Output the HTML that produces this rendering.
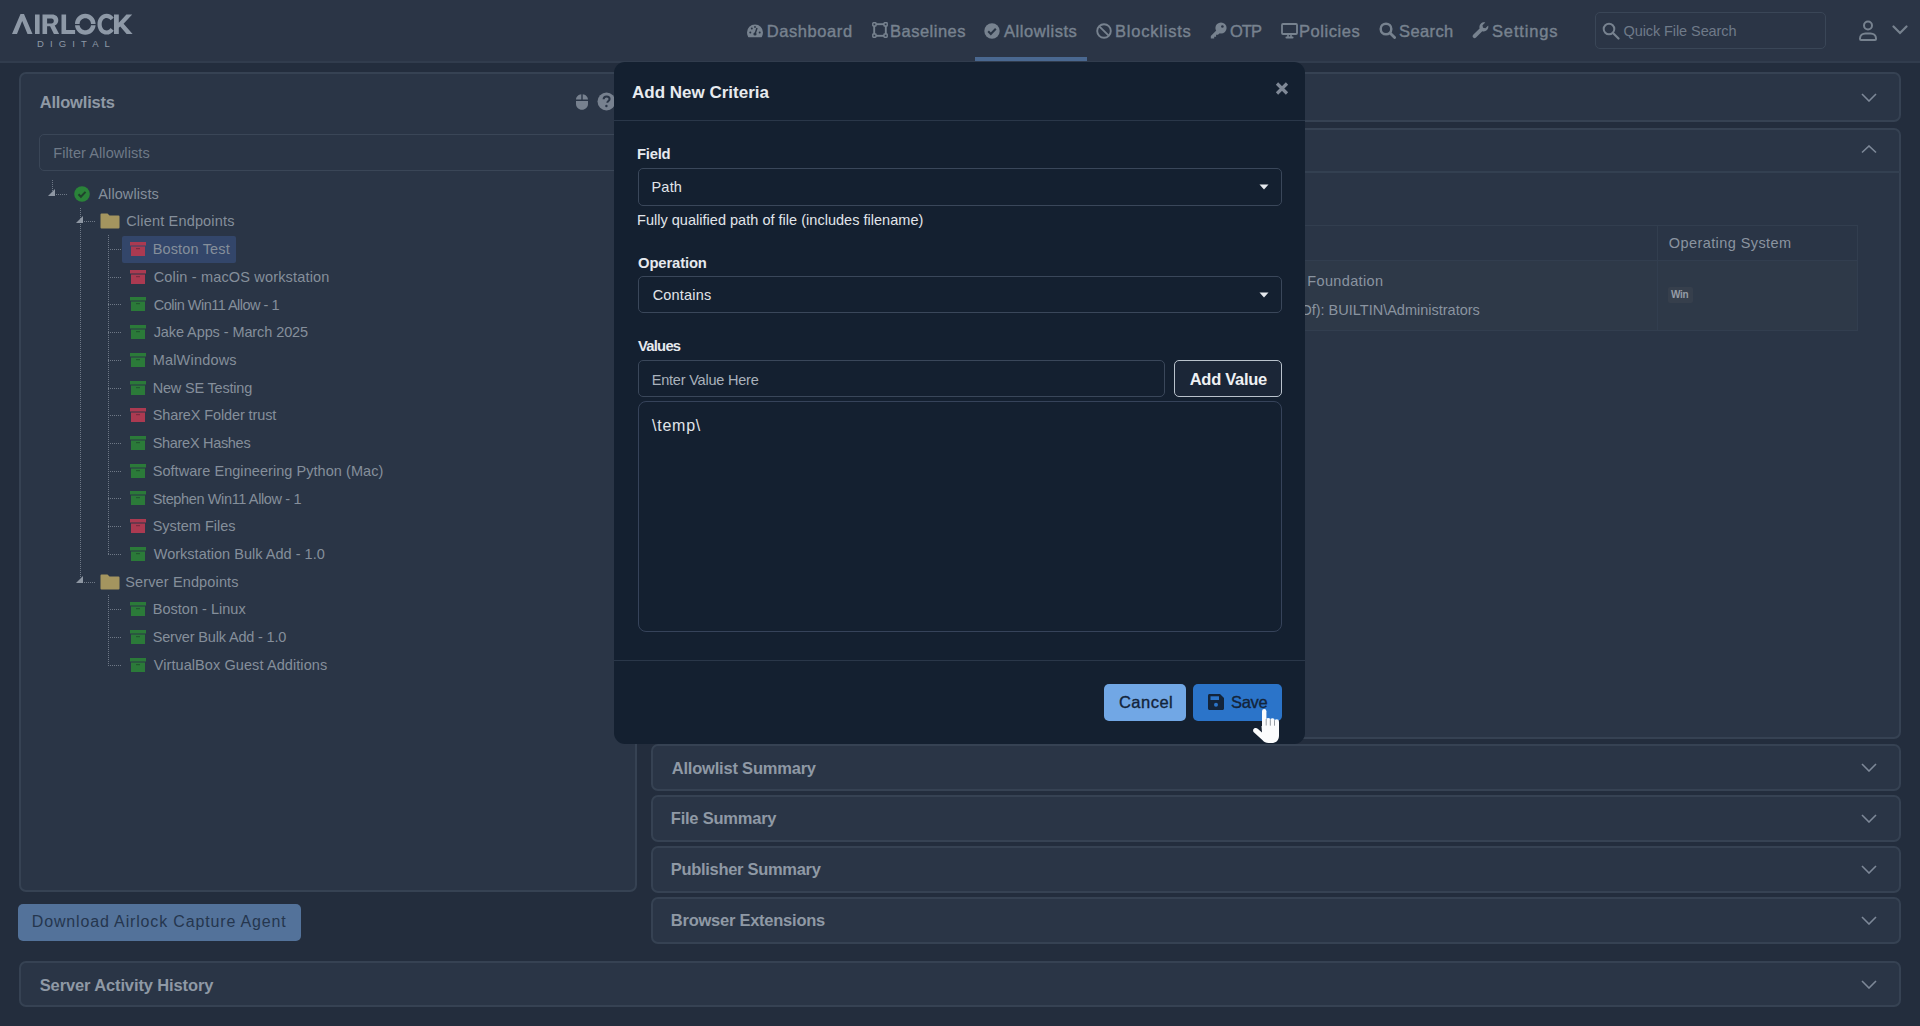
<!DOCTYPE html>
<html><head><meta charset="utf-8"><title>Airlock</title>
<style>
*{box-sizing:border-box;margin:0;padding:0}
html,body{width:1920px;height:1026px;overflow:hidden;background:#232d3d;font-family:"Liberation Sans",sans-serif}
.a{position:absolute}
.t{position:absolute;line-height:1;white-space:nowrap}
.panel{position:absolute;background:#2a3546;border:2px solid #364253;border-radius:7px}
.vd{position:absolute;width:1px;background:repeating-linear-gradient(to bottom,#6e7886 0 1px,transparent 1px 2px)}
.hd{position:absolute;height:1px;background:repeating-linear-gradient(to right,#6e7886 0 1px,transparent 1px 2px)}
.tri{position:absolute;width:0;height:0;border-left:7px solid transparent;border-bottom:7px solid #8e97a3}
.ic{position:absolute;line-height:0}
.chev{position:absolute}
</style></head><body>
<div class="a" style="left:0;top:0;width:1920px;height:62px;background:#2b3546"></div>
<div class="a" style="left:0;top:61px;width:1920px;height:2px;background:#313c4d"></div>
<svg class="a" style="left:11px;top:13px" width="125" height="36" viewBox="0 0 125 36">
<g fill="#8e99a7">
<path d="M1 21 L9.5 1 L13 1 L21.5 21 L16.5 21 L11.2 8 L6 21z"/>
<rect x="24" y="1.5" width="4.6" height="19.5"/>
<path d="M31.5 1.5h9.5c4 0 6.3 2.3 6.3 5.8 0 2.6-1.4 4.4-3.6 5.2l4.4 8.5h-5.2l-3.8-7.8h-3v7.8h-4.6z M36.1 5.5v5h4.4c1.5 0 2.3-.9 2.3-2.5s-.8-2.5-2.3-2.5z"/>
<path d="M50.5 1.5h4.6v15.5h9v4h-13.6z"/>
<g transform="translate(-2.7,0)"><path d="M77 0.8c-5.7 0-10.3 4.5-10.3 10.2h4.6c0-3.2 2.5-5.8 5.7-5.8s5.7 2.6 5.7 5.8h4.6C87.3 5.3 82.7.8 77 .8z"/>
<path d="M66.7 12.2c.4 5.3 4.8 9.5 10.3 9.5s9.9-4.2 10.3-9.5h-4.6c-.4 2.8-2.8 5-5.7 5s-5.3-2.2-5.7-5z"/></g>
<g transform="translate(7.1,0) scale(0.89,1)"><path d="M99.5 0.8c-5.8 0-10.3 4.5-10.3 10.4s4.5 10.4 10.3 10.4c3.3 0 6.1-1.5 8-3.9l-3.6-2.6c-1 1.4-2.6 2.3-4.4 2.3-3.2 0-5.6-2.6-5.6-6.2s2.4-6.2 5.6-6.2c1.8 0 3.4.9 4.4 2.3l3.6-2.6c-1.9-2.4-4.7-3.9-8-3.9z"/></g>
<path d="M103 1.5h4.8v8.2l7.6-8.2h5.8l-8.6 9.2 9 10.3h-6l-6.4-7.6-1.4 1.4v6.2h-4.8z"/>
</g>
<text x="26" y="34" font-family="Liberation Sans" font-size="9.5" fill="#8e99a7" letter-spacing="6.1">DIGITAL</text>
</svg>
<div class="t" style="left:766.80px;top:22.98px;font-size:16.5px;font-weight:400;letter-spacing:0.575px;color:#77828f;-webkit-text-stroke:0.4px #77828f">Dashboard</div>
<div class="t" style="left:890.00px;top:22.98px;font-size:16.5px;font-weight:400;letter-spacing:0.5px;color:#77828f;-webkit-text-stroke:0.4px #77828f">Baselines</div>
<div class="t" style="left:1004.00px;top:22.98px;font-size:16.5px;font-weight:400;letter-spacing:0.556px;color:#77828f;-webkit-text-stroke:0.4px #77828f">Allowlists</div>
<div class="t" style="left:1115.00px;top:22.98px;font-size:16.5px;font-weight:400;letter-spacing:0.778px;color:#77828f;-webkit-text-stroke:0.4px #77828f">Blocklists</div>
<div class="t" style="left:1230.00px;top:22.98px;font-size:16.5px;font-weight:400;letter-spacing:-1.0px;color:#77828f;-webkit-text-stroke:0.4px #77828f">OTP</div>
<div class="t" style="left:1299.00px;top:22.98px;font-size:16.5px;font-weight:400;letter-spacing:0.571px;color:#77828f;-webkit-text-stroke:0.4px #77828f">Policies</div>
<div class="t" style="left:1399.00px;top:22.98px;font-size:16.5px;font-weight:400;letter-spacing:0.4px;color:#77828f;-webkit-text-stroke:0.4px #77828f">Search</div>
<div class="t" style="left:1492.00px;top:22.98px;font-size:16.5px;font-weight:400;letter-spacing:0.857px;color:#77828f;-webkit-text-stroke:0.4px #77828f">Settings</div>
<svg class="a" style="left:746px;top:22px" width="18" height="18" viewBox="0 0 18 18"><path d="M9 2.5A8 8 0 0 0 1 10.5c0 1.6.4 3.1 1.2 4.4.2.3.5.4.8.4h12c.3 0 .6-.1.8-.4.8-1.3 1.2-2.8 1.2-4.4A8 8 0 0 0 9 2.5z" fill="#77828f"/><circle cx="9" cy="12" r="1.6" fill="#2a3545"/><path d="M9 12l2-6" stroke="#2a3545" stroke-width="1.4"/><circle cx="4.3" cy="10.5" r="1" fill="#2a3545"/><circle cx="13.7" cy="10.5" r="1" fill="#2a3545"/><circle cx="5.8" cy="6.6" r="1" fill="#2a3545"/><circle cx="9" cy="5" r="0.9" fill="#2a3545"/></svg>
<svg class="a" style="left:872px;top:22px" width="16" height="16" viewBox="0 0 16 16"><rect x="2.2" y="2.2" width="11.6" height="11.6" fill="none" stroke="#77828f" stroke-width="1.9"/><g fill="#2b3546" stroke="#77828f" stroke-width="1.4"><rect x="0.8" y="0.8" width="3.2" height="3.2" rx="0.6"/><rect x="12" y="0.8" width="3.2" height="3.2" rx="0.6"/><rect x="0.8" y="12" width="3.2" height="3.2" rx="0.6"/><rect x="12" y="12" width="3.2" height="3.2" rx="0.6"/></g></svg>
<svg class="a" style="left:984px;top:23px" width="16" height="16" viewBox="0 0 16 16"><circle cx="8" cy="8" r="7.7" fill="#77828f"/><path d="M4.2 8.3l2.6 2.6 5-5.2" stroke="#2a3545" stroke-width="2.1" fill="none"/></svg>
<svg class="a" style="left:1096px;top:23px" width="16" height="16" viewBox="0 0 16 16"><circle cx="8" cy="8" r="6.8" fill="none" stroke="#77828f" stroke-width="1.9"/><path d="M3.3 3.3l9.4 9.4" stroke="#77828f" stroke-width="1.9"/></svg>
<svg class="a" style="left:1210px;top:22px" width="17" height="17" viewBox="0 0 17 17"><circle cx="11" cy="6" r="5.6" fill="#77828f"/><circle cx="12.4" cy="4.5" r="1.3" fill="#2b3546"/><path d="M8 6.8L0.8 14v2.6h3.4v-1.9h1.9v-1.9h1.9l2.8-2.8z" fill="#77828f"/></svg>
<svg class="a" style="left:1281px;top:23px" width="17" height="16" viewBox="0 0 17 16"><rect x="1" y="1" width="15" height="10" rx="1" fill="none" stroke="#77828f" stroke-width="1.8"/><path d="M7 11.5v2.5M10 11.5v2.5" stroke="#77828f" stroke-width="1.6"/><rect x="4.5" y="13.5" width="8" height="2" rx="0.8" fill="#77828f"/></svg>
<svg class="a" style="left:1379px;top:22px" width="17" height="17" viewBox="0 0 17 17"><circle cx="7" cy="7" r="5.3" fill="none" stroke="#77828f" stroke-width="2.5"/><path d="M11 11l4.6 4.6" stroke="#77828f" stroke-width="2.8" stroke-linecap="round"/></svg>
<svg class="a" style="left:1472px;top:22px" width="17" height="17" viewBox="0 0 17 17"><path d="M16.2 3.6c.4 1.6 0 3.3-1.2 4.5-1.3 1.3-3.1 1.6-4.7 1.1L4 15.6c-.8.8-2 .8-2.8 0s-.8-2 0-2.8l6.4-6.4C7.1 4.8 7.5 3 8.8 1.7 10 .5 11.7.1 13.3.5l-2.8 2.8.5 2.4 2.4.5z" fill="#77828f"/></svg>
<svg class="a" style="left:1602px;top:22px" width="18" height="18" viewBox="0 0 18 18"><circle cx="7" cy="7" r="5.3" fill="none" stroke="#77828f" stroke-width="2"/><path d="M11 11l5.5 5.5" stroke="#77828f" stroke-width="2.2" stroke-linecap="round"/></svg>
<svg class="a" style="left:1857px;top:20px" width="22" height="21" viewBox="0 0 22 21"><circle cx="11" cy="5.5" r="4" fill="none" stroke="#77828f" stroke-width="2"/><path d="M3 18.5c0-3 2.5-5 5.5-5h5c3 0 5.5 2 5.5 5v.5c0 .5-.4 1-1 1h-14c-.6 0-1-.5-1-1z" fill="none" stroke="#77828f" stroke-width="2"/></svg>
<svg class="a" style="left:1892px;top:25px" width="16" height="10" viewBox="0 0 16 10"><path d="M1.5 1.5l6.5 6.5 6.5-6.5" fill="none" stroke="#77828f" stroke-width="2.2" stroke-linecap="round"/></svg>

<div class="a" style="left:975px;top:57px;width:112px;height:4px;background:#4a6890"></div>
<div class="a" style="left:1595px;top:12px;width:231px;height:37px;border:1.5px solid #3a4657;border-radius:5px"></div>
<div class="t" style="left:1623.50px;top:23.97px;font-size:14.5px;font-weight:400;letter-spacing:-0.086px;color:#6f7a89;">Quick File Search</div>
<div class="panel" style="left:19px;top:72px;width:618px;height:820px"></div>
<div class="t" style="left:39.70px;top:93.67px;font-size:16.5px;font-weight:700;letter-spacing:-0.189px;color:#8f99a5;">Allowlists</div>
<svg class="a" style="left:575px;top:93px" width="14" height="17" viewBox="0 0 14 17"><path d="M1 6.5h5.3V1.2C3.4 1.5 1.1 3.8 1 6.5z M7.7 1.2v5.3H13C12.9 3.8 10.6 1.5 7.7 1.2z M1 8v3c0 3.2 2.7 5.8 6 5.8s6-2.6 6-5.8V8z" fill="#77818f"/></svg>
<svg class="a" style="left:597px;top:92px" width="19" height="19" viewBox="0 0 19 19"><circle cx="9.5" cy="9.5" r="9" fill="#77818f"/><path d="M6.6 7.2c0-1.7 1.3-2.8 3-2.8s3 1.1 3 2.6c0 1.9-2.3 2.1-2.3 3.8" fill="none" stroke="#2a3546" stroke-width="2"/><circle cx="9.4" cy="14" r="1.2" fill="#2a3546"/></svg>
<div class="a" style="left:39px;top:134px;width:590px;height:37px;border:1.5px solid #3a4657;border-radius:5px"></div>
<div class="t" style="left:53.30px;top:145.78px;font-size:14.5px;font-weight:400;letter-spacing:0.081px;color:#6f7a88;">Filter Allowlists</div>
<div class="a" style="left:122px;top:236px;width:114px;height:27px;background:#33466a;border-radius:2px"></div>
<div class="vd" style="left:52px;top:180px;height:14px"></div>
<div class="tri" style="left:48px;top:189px"></div>
<div class="hd" style="left:56px;top:194px;width:11px"></div>
<div class="vd" style="left:80px;top:208px;height:369px"></div>
<div class="tri" style="left:76px;top:216px"></div>
<div class="hd" style="left:84px;top:221px;width:11px"></div>
<div class="hd" style="left:108px;top:249px;width:14px"></div>
<div class="hd" style="left:108px;top:277px;width:14px"></div>
<div class="hd" style="left:108px;top:304px;width:14px"></div>
<div class="hd" style="left:108px;top:332px;width:14px"></div>
<div class="hd" style="left:108px;top:360px;width:14px"></div>
<div class="hd" style="left:108px;top:388px;width:14px"></div>
<div class="hd" style="left:108px;top:415px;width:14px"></div>
<div class="hd" style="left:108px;top:443px;width:14px"></div>
<div class="hd" style="left:108px;top:471px;width:14px"></div>
<div class="hd" style="left:108px;top:498px;width:14px"></div>
<div class="hd" style="left:108px;top:526px;width:14px"></div>
<div class="hd" style="left:108px;top:554px;width:14px"></div>
<div class="tri" style="left:76px;top:576px"></div>
<div class="hd" style="left:84px;top:582px;width:11px"></div>
<div class="hd" style="left:108px;top:609px;width:14px"></div>
<div class="hd" style="left:108px;top:637px;width:14px"></div>
<div class="hd" style="left:108px;top:665px;width:14px"></div>
<div class="vd" style="left:108px;top:235px;height:320px"></div>
<div class="vd" style="left:108px;top:595px;height:71px"></div>
<div class="t" style="left:98.30px;top:186.68px;font-size:14.5px;font-weight:400;letter-spacing:0.099px;color:#858f9b;">Allowlists</div>
<svg class="a" style="left:74px;top:186px" width="16" height="16" viewBox="0 0 16 16"><circle cx="8" cy="8" r="7.8" fill="#2a8339"/><path d="M4.5 8.3l2.4 2.4 4.6-4.8" stroke="#20412c" stroke-width="2" fill="none"/></svg>
<div class="t" style="left:126.20px;top:214.40px;font-size:14.5px;font-weight:400;letter-spacing:0.179px;color:#858f9b;">Client Endpoints</div>
<svg class="a" style="left:100px;top:213px" width="20" height="16" viewBox="0 0 20 16"><path d="M1.5 0.5h6l2 2h9a1 1 0 0 1 1 1v11a1 1 0 0 1-1 1h-17a1 1 0 0 1-1-1v-13a1 1 0 0 1 1-1z" fill="#a4955f"/></svg>
<div class="t" style="left:152.70px;top:242.12px;font-size:14.5px;font-weight:400;letter-spacing:0.15px;color:#858f9b;">Boston Test</div>
<svg class="a" style="left:130px;top:242px" width="16" height="14" viewBox="0 0 16 14"><rect x="0" y="0" width="16" height="3.5" fill="#ab3a51"/><rect x="1" y="4.5" width="14" height="9.5" fill="#ab3a51"/><rect x="6" y="6" width="4" height="1.2" fill="#7c2c40"/></svg>
<div class="t" style="left:153.70px;top:269.83px;font-size:14.5px;font-weight:400;letter-spacing:0.167px;color:#858f9b;">Colin - macOS workstation</div>
<svg class="a" style="left:130px;top:270px" width="16" height="14" viewBox="0 0 16 14"><rect x="0" y="0" width="16" height="3.5" fill="#ab3a51"/><rect x="1" y="4.5" width="14" height="9.5" fill="#ab3a51"/><rect x="6" y="6" width="4" height="1.2" fill="#7c2c40"/></svg>
<div class="t" style="left:153.70px;top:297.56px;font-size:14.5px;font-weight:400;letter-spacing:-0.505px;color:#858f9b;">Colin Win11 Allow - 1</div>
<svg class="a" style="left:130px;top:297px" width="16" height="14" viewBox="0 0 16 14"><rect x="0" y="0" width="16" height="3.5" fill="#2b7a39"/><rect x="1" y="4.5" width="14" height="9.5" fill="#2b7a39"/><rect x="6" y="6" width="4" height="1.2" fill="#215a2e"/></svg>
<div class="t" style="left:153.70px;top:325.28px;font-size:14.5px;font-weight:400;letter-spacing:-0.09px;color:#858f9b;">Jake Apps - March 2025</div>
<svg class="a" style="left:130px;top:325px" width="16" height="14" viewBox="0 0 16 14"><rect x="0" y="0" width="16" height="3.5" fill="#2b7a39"/><rect x="1" y="4.5" width="14" height="9.5" fill="#2b7a39"/><rect x="6" y="6" width="4" height="1.2" fill="#215a2e"/></svg>
<div class="t" style="left:152.70px;top:353.00px;font-size:14.5px;font-weight:400;letter-spacing:0.189px;color:#858f9b;">MalWindows</div>
<svg class="a" style="left:130px;top:353px" width="16" height="14" viewBox="0 0 16 14"><rect x="0" y="0" width="16" height="3.5" fill="#2b7a39"/><rect x="1" y="4.5" width="14" height="9.5" fill="#2b7a39"/><rect x="6" y="6" width="4" height="1.2" fill="#215a2e"/></svg>
<div class="t" style="left:152.70px;top:380.71px;font-size:14.5px;font-weight:400;letter-spacing:-0.192px;color:#858f9b;">New SE Testing</div>
<svg class="a" style="left:130px;top:381px" width="16" height="14" viewBox="0 0 16 14"><rect x="0" y="0" width="16" height="3.5" fill="#2b7a39"/><rect x="1" y="4.5" width="14" height="9.5" fill="#2b7a39"/><rect x="6" y="6" width="4" height="1.2" fill="#215a2e"/></svg>
<div class="t" style="left:152.70px;top:408.44px;font-size:14.5px;font-weight:400;letter-spacing:-0.116px;color:#858f9b;">ShareX Folder trust</div>
<svg class="a" style="left:130px;top:408px" width="16" height="14" viewBox="0 0 16 14"><rect x="0" y="0" width="16" height="3.5" fill="#ab3a51"/><rect x="1" y="4.5" width="14" height="9.5" fill="#ab3a51"/><rect x="6" y="6" width="4" height="1.2" fill="#7c2c40"/></svg>
<div class="t" style="left:152.70px;top:436.16px;font-size:14.5px;font-weight:400;letter-spacing:-0.301px;color:#858f9b;">ShareX Hashes</div>
<svg class="a" style="left:130px;top:436px" width="16" height="14" viewBox="0 0 16 14"><rect x="0" y="0" width="16" height="3.5" fill="#2b7a39"/><rect x="1" y="4.5" width="14" height="9.5" fill="#2b7a39"/><rect x="6" y="6" width="4" height="1.2" fill="#215a2e"/></svg>
<div class="t" style="left:152.70px;top:463.88px;font-size:14.5px;font-weight:400;letter-spacing:0.053px;color:#858f9b;">Software Engineering Python (Mac)</div>
<svg class="a" style="left:130px;top:464px" width="16" height="14" viewBox="0 0 16 14"><rect x="0" y="0" width="16" height="3.5" fill="#2b7a39"/><rect x="1" y="4.5" width="14" height="9.5" fill="#2b7a39"/><rect x="6" y="6" width="4" height="1.2" fill="#215a2e"/></svg>
<div class="t" style="left:152.70px;top:491.59px;font-size:14.5px;font-weight:400;letter-spacing:-0.367px;color:#858f9b;">Stephen Win11 Allow - 1</div>
<svg class="a" style="left:130px;top:491px" width="16" height="14" viewBox="0 0 16 14"><rect x="0" y="0" width="16" height="3.5" fill="#2b7a39"/><rect x="1" y="4.5" width="14" height="9.5" fill="#2b7a39"/><rect x="6" y="6" width="4" height="1.2" fill="#215a2e"/></svg>
<div class="t" style="left:152.70px;top:519.31px;font-size:14.5px;font-weight:400;letter-spacing:-0.017px;color:#858f9b;">System Files</div>
<svg class="a" style="left:130px;top:519px" width="16" height="14" viewBox="0 0 16 14"><rect x="0" y="0" width="16" height="3.5" fill="#ab3a51"/><rect x="1" y="4.5" width="14" height="9.5" fill="#ab3a51"/><rect x="6" y="6" width="4" height="1.2" fill="#7c2c40"/></svg>
<div class="t" style="left:153.70px;top:547.03px;font-size:14.5px;font-weight:400;letter-spacing:0.02px;color:#858f9b;">Workstation Bulk Add - 1.0</div>
<svg class="a" style="left:130px;top:547px" width="16" height="14" viewBox="0 0 16 14"><rect x="0" y="0" width="16" height="3.5" fill="#2b7a39"/><rect x="1" y="4.5" width="14" height="9.5" fill="#2b7a39"/><rect x="6" y="6" width="4" height="1.2" fill="#215a2e"/></svg>
<div class="t" style="left:125.20px;top:574.75px;font-size:14.5px;font-weight:400;letter-spacing:0.14px;color:#858f9b;">Server Endpoints</div>
<svg class="a" style="left:100px;top:574px" width="20" height="16" viewBox="0 0 20 16"><path d="M1.5 0.5h6l2 2h9a1 1 0 0 1 1 1v11a1 1 0 0 1-1 1h-17a1 1 0 0 1-1-1v-13a1 1 0 0 1 1-1z" fill="#a4955f"/></svg>
<div class="t" style="left:152.70px;top:602.47px;font-size:14.5px;font-weight:400;letter-spacing:0.024px;color:#858f9b;">Boston - Linux</div>
<svg class="a" style="left:130px;top:602px" width="16" height="14" viewBox="0 0 16 14"><rect x="0" y="0" width="16" height="3.5" fill="#2b7a39"/><rect x="1" y="4.5" width="14" height="9.5" fill="#2b7a39"/><rect x="6" y="6" width="4" height="1.2" fill="#215a2e"/></svg>
<div class="t" style="left:152.70px;top:630.19px;font-size:14.5px;font-weight:400;letter-spacing:-0.165px;color:#858f9b;">Server Bulk Add - 1.0</div>
<svg class="a" style="left:130px;top:630px" width="16" height="14" viewBox="0 0 16 14"><rect x="0" y="0" width="16" height="3.5" fill="#2b7a39"/><rect x="1" y="4.5" width="14" height="9.5" fill="#2b7a39"/><rect x="6" y="6" width="4" height="1.2" fill="#215a2e"/></svg>
<div class="t" style="left:153.70px;top:657.91px;font-size:14.5px;font-weight:400;letter-spacing:0.084px;color:#858f9b;">VirtualBox Guest Additions</div>
<svg class="a" style="left:130px;top:658px" width="16" height="14" viewBox="0 0 16 14"><rect x="0" y="0" width="16" height="3.5" fill="#2b7a39"/><rect x="1" y="4.5" width="14" height="9.5" fill="#2b7a39"/><rect x="6" y="6" width="4" height="1.2" fill="#215a2e"/></svg>
<div class="a" style="left:18px;top:904px;width:283px;height:37px;background:#53729a;border-radius:5px"></div>
<div class="t" style="left:31.80px;top:914.40px;font-size:16px;font-weight:400;letter-spacing:0.845px;color:#25364e;">Download Airlock Capture Agent</div>
<div class="panel" style="left:19px;top:961px;width:1882px;height:46px"></div>
<div class="t" style="left:39.70px;top:976.77px;font-size:16.5px;font-weight:700;letter-spacing:-0.122px;color:#8f99a5;">Server Activity History</div>
<div class="panel" style="left:651px;top:72px;width:1250px;height:50px"></div>
<svg class="a" style="left:1861px;top:93px" width="16" height="9" viewBox="0 0 16 9"><path d="M1 1l7 7 7-7" fill="none" stroke="#7d8898" stroke-width="1.6"/></svg>
<div class="panel" style="left:651px;top:128px;width:1250px;height:611px"></div>
<svg class="a" style="left:1861px;top:145px" width="16" height="9" viewBox="0 0 16 9"><path d="M1 7.5L8 1l7 6.5" fill="none" stroke="#7d8898" stroke-width="1.6"/></svg>
<div class="a" style="left:653px;top:171px;width:1247px;height:2px;background:#334051"></div>
<div class="a" style="left:700px;top:225px;width:1158px;height:106px;border:1px solid #323e4f"></div>
<div class="a" style="left:701px;top:260px;width:1156px;height:70px;background:#2e3948;border-top:1px solid #323e4f"></div>
<div class="a" style="left:1657px;top:226px;width:1px;height:104px;background:#323e4f"></div>
<div class="t" style="left:1668.80px;top:235.98px;font-size:14.5px;font-weight:400;letter-spacing:0.414px;color:#8a94a0;">Operating System</div>
<div class="t" style="left:1307.30px;top:274.38px;font-size:14.5px;font-weight:400;letter-spacing:0.345px;color:#8a94a0;">Foundation</div>
<div class="t" style="left:1238.40px;top:302.88px;font-size:14.5px;font-weight:400;letter-spacing:0.0px;color:#8a94a0;">(Member Of): BUILTIN\Administrators</div>
<div class="a" style="left:1668px;top:287px;width:25px;height:16px;background:#363f4c;border-radius:2px"></div>
<div class="t" style="left:1671px;top:290px;font-size:10px;font-weight:700;color:#959ca6;letter-spacing:-0.3px">Win</div>
<div class="panel" style="left:651px;top:744px;width:1250px;height:47px"></div>
<div class="t" style="left:671.80px;top:760.18px;font-size:16.5px;font-weight:700;letter-spacing:-0.211px;color:#8f99a5;">Allowlist Summary</div>
<svg class="a" style="left:1861px;top:763px" width="16" height="9" viewBox="0 0 16 9"><path d="M1 1l7 7 7-7" fill="none" stroke="#7d8898" stroke-width="1.6"/></svg>
<div class="panel" style="left:651px;top:795px;width:1250px;height:47px"></div>
<div class="t" style="left:670.80px;top:810.48px;font-size:16.5px;font-weight:700;letter-spacing:-0.227px;color:#8f99a5;">File Summary</div>
<svg class="a" style="left:1861px;top:814px" width="16" height="9" viewBox="0 0 16 9"><path d="M1 1l7 7 7-7" fill="none" stroke="#7d8898" stroke-width="1.6"/></svg>
<div class="panel" style="left:651px;top:846px;width:1250px;height:47px"></div>
<div class="t" style="left:670.80px;top:860.98px;font-size:16.5px;font-weight:700;letter-spacing:-0.307px;color:#8f99a5;">Publisher Summary</div>
<svg class="a" style="left:1861px;top:865px" width="16" height="9" viewBox="0 0 16 9"><path d="M1 1l7 7 7-7" fill="none" stroke="#7d8898" stroke-width="1.6"/></svg>
<div class="panel" style="left:651px;top:897px;width:1250px;height:47px"></div>
<div class="t" style="left:670.80px;top:911.88px;font-size:16.5px;font-weight:700;letter-spacing:-0.248px;color:#8f99a5;">Browser Extensions</div>
<svg class="a" style="left:1861px;top:916px" width="16" height="9" viewBox="0 0 16 9"><path d="M1 1l7 7 7-7" fill="none" stroke="#7d8898" stroke-width="1.6"/></svg>
<svg class="a" style="left:1861px;top:980px" width="16" height="9" viewBox="0 0 16 9"><path d="M1 1l7 7 7-7" fill="none" stroke="#7d8898" stroke-width="1.6"/></svg>
<div class="a" style="left:614px;top:62px;width:691px;height:682px;background:#142030;border-radius:11px"></div>
<div class="t" style="left:632.00px;top:84.25px;font-size:17px;font-weight:700;letter-spacing:0.0px;color:#e8ebef;">Add New Criteria</div>
<svg class="a" style="left:1275px;top:82px" width="14" height="13" viewBox="0 0 14 13"><path d="M2 1.5l10 10M12 1.5l-10 10" stroke="#7f8896" stroke-width="3.2"/></svg>
<div class="a" style="left:614px;top:120px;width:691px;height:1px;background:#2a3749"></div>
<div class="t" style="left:637.00px;top:146.92px;font-size:14.8px;font-weight:700;letter-spacing:-0.25px;color:#e6e9ee;">Field</div>
<div class="a" style="left:638px;top:168px;width:644px;height:38px;border:1.5px solid #3a475a;border-radius:5px"></div>
<div class="t" style="left:651.50px;top:180.18px;font-size:14.5px;font-weight:400;letter-spacing:0.2px;color:#e1e5ea;">Path</div>
<svg class="a" style="left:1259px;top:184px" width="10" height="6" viewBox="0 0 10 6"><path d="M0.5 0.5h9L5 5.5z" fill="#e6e9ee"/></svg>
<div class="t" style="left:637.00px;top:212.98px;font-size:14.5px;font-weight:400;letter-spacing:0.021px;color:#e1e5ea;">Fully qualified path of file (includes filename)</div>
<div class="t" style="left:638.00px;top:255.72px;font-size:14.8px;font-weight:700;letter-spacing:-0.125px;color:#e6e9ee;">Operation</div>
<div class="a" style="left:638px;top:276px;width:644px;height:37px;border:1.5px solid #3a475a;border-radius:5px"></div>
<div class="t" style="left:652.70px;top:288.07px;font-size:14.5px;font-weight:400;letter-spacing:0.185px;color:#e1e5ea;">Contains</div>
<svg class="a" style="left:1259px;top:292px" width="10" height="6" viewBox="0 0 10 6"><path d="M0.5 0.5h9L5 5.5z" fill="#e6e9ee"/></svg>
<div class="t" style="left:638.00px;top:339.12px;font-size:14.8px;font-weight:700;letter-spacing:-0.76px;color:#e6e9ee;">Values</div>
<div class="a" style="left:638px;top:360px;width:527px;height:37px;border:1.5px solid #3a475a;border-radius:5px"></div>
<div class="t" style="left:651.70px;top:372.88px;font-size:14.5px;font-weight:400;letter-spacing:-0.207px;color:#a9b1bb;">Enter Value Here</div>
<div class="a" style="left:1174px;top:360px;width:108px;height:37px;background:#1b2637;border:1.5px solid #b9c2cc;border-radius:5px"></div>
<div class="t" style="left:1189.70px;top:370.68px;font-size:16.5px;font-weight:700;letter-spacing:-0.275px;color:#eef0f3;">Add Value</div>
<div class="a" style="left:638px;top:401px;width:644px;height:231px;border:1.5px solid #36435a;border-radius:8px"></div>
<div class="t" style="left:652.10px;top:418.40px;font-size:16px;font-weight:400;letter-spacing:0.74px;color:#e1e5ea;">\temp\</div>
<div class="a" style="left:614px;top:660px;width:691px;height:1px;background:#2a3749"></div>
<div class="a" style="left:1104px;top:684px;width:82px;height:37px;background:#71a7e5;border-radius:5px"></div>
<div class="t" style="left:1118.90px;top:693.98px;font-size:16.5px;font-weight:400;letter-spacing:0.5px;color:#13243a;-webkit-text-stroke:0.35px #13243a">Cancel</div>
<div class="a" style="left:1193px;top:684px;width:89px;height:37px;background:#2b74c9;border-radius:5px"></div>
<svg class="a" style="left:1208px;top:694px" width="16" height="16" viewBox="0 0 16 16"><path d="M1.5 0h10.5l4 4v10.5c0 .8-.7 1.5-1.5 1.5h-13C.7 16 0 15.3 0 14.5v-13C0 .7.7 0 1.5 0z" fill="#13243a"/><rect x="2.5" y="2.3" width="8.5" height="3.7" fill="#2b74c9"/><circle cx="8" cy="10.8" r="2" fill="#2b74c9"/></svg>
<div class="t" style="left:1231.00px;top:693.98px;font-size:16.5px;font-weight:400;letter-spacing:-0.333px;color:#13243a;-webkit-text-stroke:0.35px #13243a">Save</div>
<svg class="a" style="left:1250px;top:706px" width="32" height="40" viewBox="0 0 32 40">
<g fill="#fbfcfd">
<rect x="12" y="3" width="4.4" height="26" rx="2.2"/>
<rect x="16" y="12" width="4.4" height="16" rx="2"/>
<rect x="20.2" y="12.3" width="4.4" height="16" rx="2"/>
<rect x="24.4" y="13.2" width="4.6" height="16" rx="2.3"/>
<path d="M11.5 20H29V29.5C29 34.5 26 37 21.5 37H18.5C15.8 37 14.2 36 12.6 34.2L3.8 26.2C2.7 25 2.9 23.3 4.1 22.5 5.3 21.7 6.9 21.9 8 22.9L12 26.5z"/>
</g>
<path d="M16.2 13v6.5M20.3 13.3v6.2M24.5 14.2v5.3" stroke="#8f959c" stroke-width="0.9"/>
</svg>
</body></html>
